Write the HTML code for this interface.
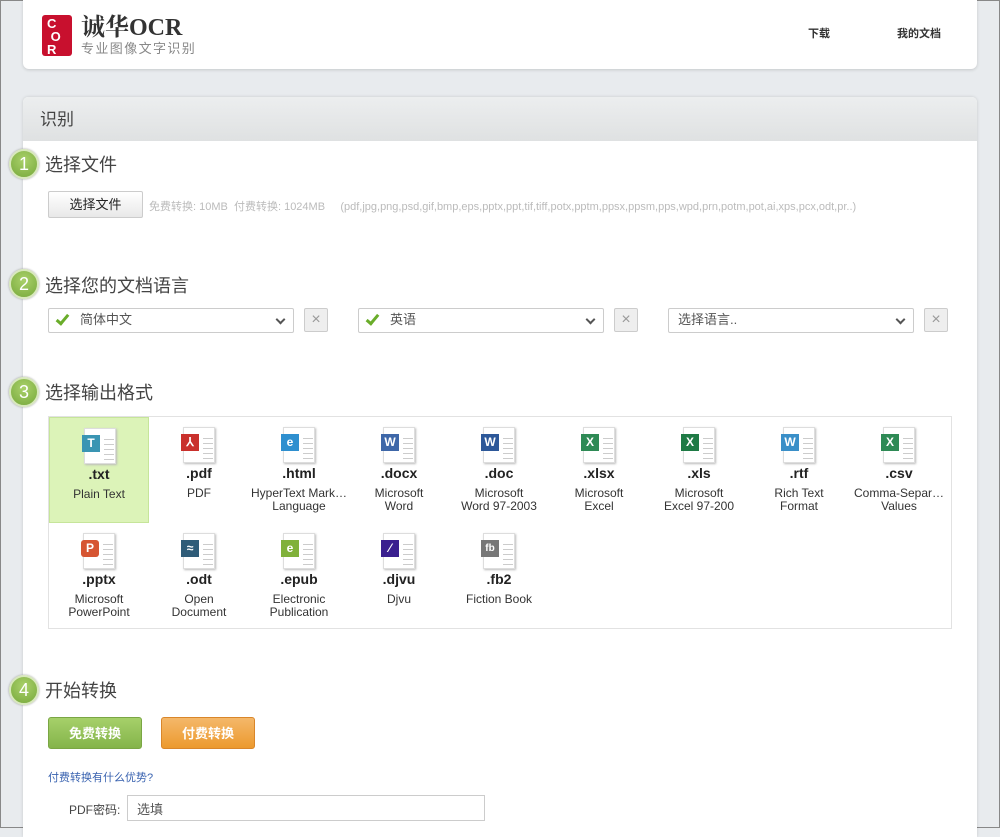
<!DOCTYPE html>
<html><head><meta charset="utf-8"><style>
*{margin:0;padding:0;box-sizing:border-box}
body{width:1000px;height:828px;overflow:hidden;background:#e8ebee;font-family:"Liberation Sans","Noto Sans CJK SC",sans-serif;position:relative;border:1px solid #888;}
.a{position:absolute}
.hdr{left:22px;top:-1px;width:954px;height:69px;background:#fff;border-radius:0 0 6px 6px;box-shadow:0 1px 3px rgba(0,0,0,.15)}
.panel{left:22px;top:96px;width:954px;height:740px;background:#fff;border-radius:5px 5px 0 0;box-shadow:0 0 3px rgba(0,0,0,.15)}
.ph{left:0;top:0;width:954px;height:44px;background:linear-gradient(#eceeef,#dfe1e2);border-radius:5px 5px 0 0;font-size:17px;color:#444;padding:8px 17px}
.num{width:30px;height:30px;border-radius:50%;background:radial-gradient(circle at 50% 35%,#aad16a,#76a83b);border:2px solid #d8e8bd;color:#fff;font-size:18px;text-align:center;line-height:26px;box-shadow:0 0 2px #999}
.st{font-size:18px;color:#444}
.sel{height:25px;border:1px solid #ccc;border-radius:2px;background:#fff;font-size:13px;color:#555;padding:0 0 0 31px;line-height:22px}
.sel:after{content:"";position:absolute;right:9px;top:7px;width:5px;height:5px;border-right:2px solid #555;border-bottom:2px solid #555;transform:rotate(45deg)}
.chk{position:absolute;left:10px;top:3px;width:7px;height:13px;border-right:3px solid #6aad2a;border-bottom:3px solid #6aad2a;transform:rotate(40deg)}
.x{width:24px;height:24px;border:1px solid #ccc;background:#eee;border-radius:2px;color:#999;text-align:center;font-size:16px;line-height:21px}
.grid{left:47px;top:415px;width:904px;height:213px;border:1px solid #e2e2e2}
.cell{position:absolute;width:100px;height:106px;text-align:center;font-size:12px;color:#333;line-height:13.5px}
.cell b{display:block;font-size:14px;color:#222;margin-top:50px;margin-bottom:6px}
.doc{position:absolute;left:34px;top:10px;width:32px;height:36px;background:#fff;border:1px solid #ddd;box-shadow:1px 1px 2px #bbb;background-image:repeating-linear-gradient(#fff 0 4px,#ccc 4px 5px);background-size:10px 100%;background-repeat:no-repeat;background-position:19px 6px}
.ic{position:absolute;left:-3px;top:6px;width:18px;height:17px;color:#fff;font-size:12px;font-weight:bold;line-height:17px;text-align:center}
.btn{height:32px;border-radius:3px;color:#fff;font-size:13px;font-weight:bold;text-align:center;line-height:31px}
</style></head><body>
<div class="a hdr">
 <div class="a" style="left:19px;top:15px;width:30px;height:41px;background:#c8102e;border-radius:3px;color:#fff;font-size:13px;line-height:13px;padding:2px 0 0 5px;font-weight:bold">C<br>&nbsp;O<br>R</div>
 <div class="a" style="left:58px;top:16px;font-size:24px;line-height:24px;font-weight:bold;color:#333;font-family:'Liberation Serif','Noto Serif CJK SC',serif">诚华OCR</div>
 <div class="a" style="left:58px;top:41px;font-size:13px;color:#888;letter-spacing:1.4px;line-height:15px">专业图像文字识别</div>
 <div class="a" style="left:785px;top:25px;font-size:11px;font-weight:bold;color:#333">下载</div>
 <div class="a" style="left:874px;top:25px;font-size:11px;font-weight:bold;color:#333">我的文档</div>
</div>
<div class="a panel">
 <div class="a ph">识别</div>
</div>
<div class="a num" style="left:8px;top:148px">1</div><div class="a st" style="left:44px;top:150px">选择文件</div>
<div class="a" style="left:47px;top:190px;width:95px;height:27px;border:1px solid #ccc;border-radius:2px;background:linear-gradient(#fff,#e8e8e8);font-size:13px;text-align:center;line-height:25px;color:#222">选择文件</div>
<div class="a" style="left:148px;top:197px;font-size:11px;color:#bbb;white-space:nowrap">免费转换: 10MB&nbsp; 付费转换: 1024MB &nbsp; &nbsp; (pdf,jpg,png,psd,gif,bmp,eps,pptx,ppt,tif,tiff,potx,pptm,ppsx,ppsm,pps,wpd,prn,potm,pot,ai,xps,pcx,odt,pr..)</div>

<div class="a num" style="left:8px;top:268px">2</div><div class="a st" style="left:44px;top:271px">选择您的文档语言</div>
<div class="a sel" style="left:47px;top:307px;width:246px"><span class="chk"></span>简体中文</div><div class="a x" style="left:303px;top:307px">×</div>
<div class="a sel" style="left:357px;top:307px;width:246px"><span class="chk"></span>英语</div><div class="a x" style="left:613px;top:307px">×</div>
<div class="a sel" style="left:667px;top:307px;width:246px;padding-left:9px">选择语言..</div><div class="a x" style="left:923px;top:307px">×</div>

<div class="a num" style="left:8px;top:376px">3</div><div class="a st" style="left:44px;top:378px">选择输出格式</div>
<div class="a grid">
 <div class="cell" style="left:0;top:0;background:#dcf3b8;border:1px solid #c6e59a"><div class="doc"><div class="ic" style="background:#3a95b3">T</div></div><b>.txt</b>Plain Text</div>
 <div class="cell" style="left:100px;top:0"><div class="doc"><div class="ic" style="background:#c9302c">⅄</div></div><b>.pdf</b>PDF</div>
 <div class="cell" style="left:200px;top:0"><div class="doc"><div class="ic" style="background:#2e8fcf">e</div></div><b>.html</b>HyperText Mark…<br>Language</div>
 <div class="cell" style="left:300px;top:0"><div class="doc"><div class="ic" style="background:#3e67a8">W</div></div><b>.docx</b>Microsoft<br>Word</div>
 <div class="cell" style="left:400px;top:0"><div class="doc"><div class="ic" style="background:#2d5899">W</div></div><b>.doc</b>Microsoft<br>Word 97-2003</div>
 <div class="cell" style="left:500px;top:0"><div class="doc"><div class="ic" style="background:#2e8a55">X</div></div><b>.xlsx</b>Microsoft<br>Excel</div>
 <div class="cell" style="left:600px;top:0"><div class="doc"><div class="ic" style="background:#1e7a45">X</div></div><b>.xls</b>Microsoft<br>Excel 97-200</div>
 <div class="cell" style="left:700px;top:0"><div class="doc"><div class="ic" style="background:#3a8fc8">W</div></div><b>.rtf</b>Rich Text<br>Format</div>
 <div class="cell" style="left:800px;top:0"><div class="doc"><div class="ic" style="background:#2e8a55">X</div></div><b>.csv</b>Comma-Separ…<br>Values</div>
 <div class="cell" style="left:0;top:106px"><div class="doc"><div class="ic" style="background:#d65532;border-radius:3px">P</div></div><b>.pptx</b>Microsoft<br>PowerPoint</div>
 <div class="cell" style="left:100px;top:106px"><div class="doc"><div class="ic" style="background:#2f5c78">≈</div></div><b>.odt</b>Open<br>Document</div>
 <div class="cell" style="left:200px;top:106px"><div class="doc"><div class="ic" style="background:#80b13a">e</div></div><b>.epub</b>Electronic<br>Publication</div>
 <div class="cell" style="left:300px;top:106px"><div class="doc"><div class="ic" style="background:#3a1f8f">⁄</div></div><b>.djvu</b>Djvu</div>
 <div class="cell" style="left:400px;top:106px"><div class="doc"><div class="ic" style="background:#777;font-size:10px">fb</div></div><b>.fb2</b>Fiction Book</div>
</div>

<div class="a num" style="left:8px;top:674px">4</div><div class="a st" style="left:44px;top:676px">开始转换</div>
<div class="a btn" style="left:47px;top:716px;width:94px;background:linear-gradient(#a6d06a,#84b44a);border:1px solid #7aa644">免费转换</div>
<div class="a btn" style="left:160px;top:716px;width:94px;background:linear-gradient(#f4b86a,#ec9a2e);border:1px solid #d9862a">付费转换</div>
<div class="a" style="left:47px;top:768px;font-size:11px;color:#3a63b0">付费转换有什么优势?</div>
<div class="a" style="left:68px;top:800px;font-size:12px;color:#444">PDF密码:</div>
<div class="a" style="left:126px;top:794px;width:358px;height:26px;border:1px solid #ccc;font-size:13px;color:#555;padding:3px 9px">选填</div>
</body></html>
